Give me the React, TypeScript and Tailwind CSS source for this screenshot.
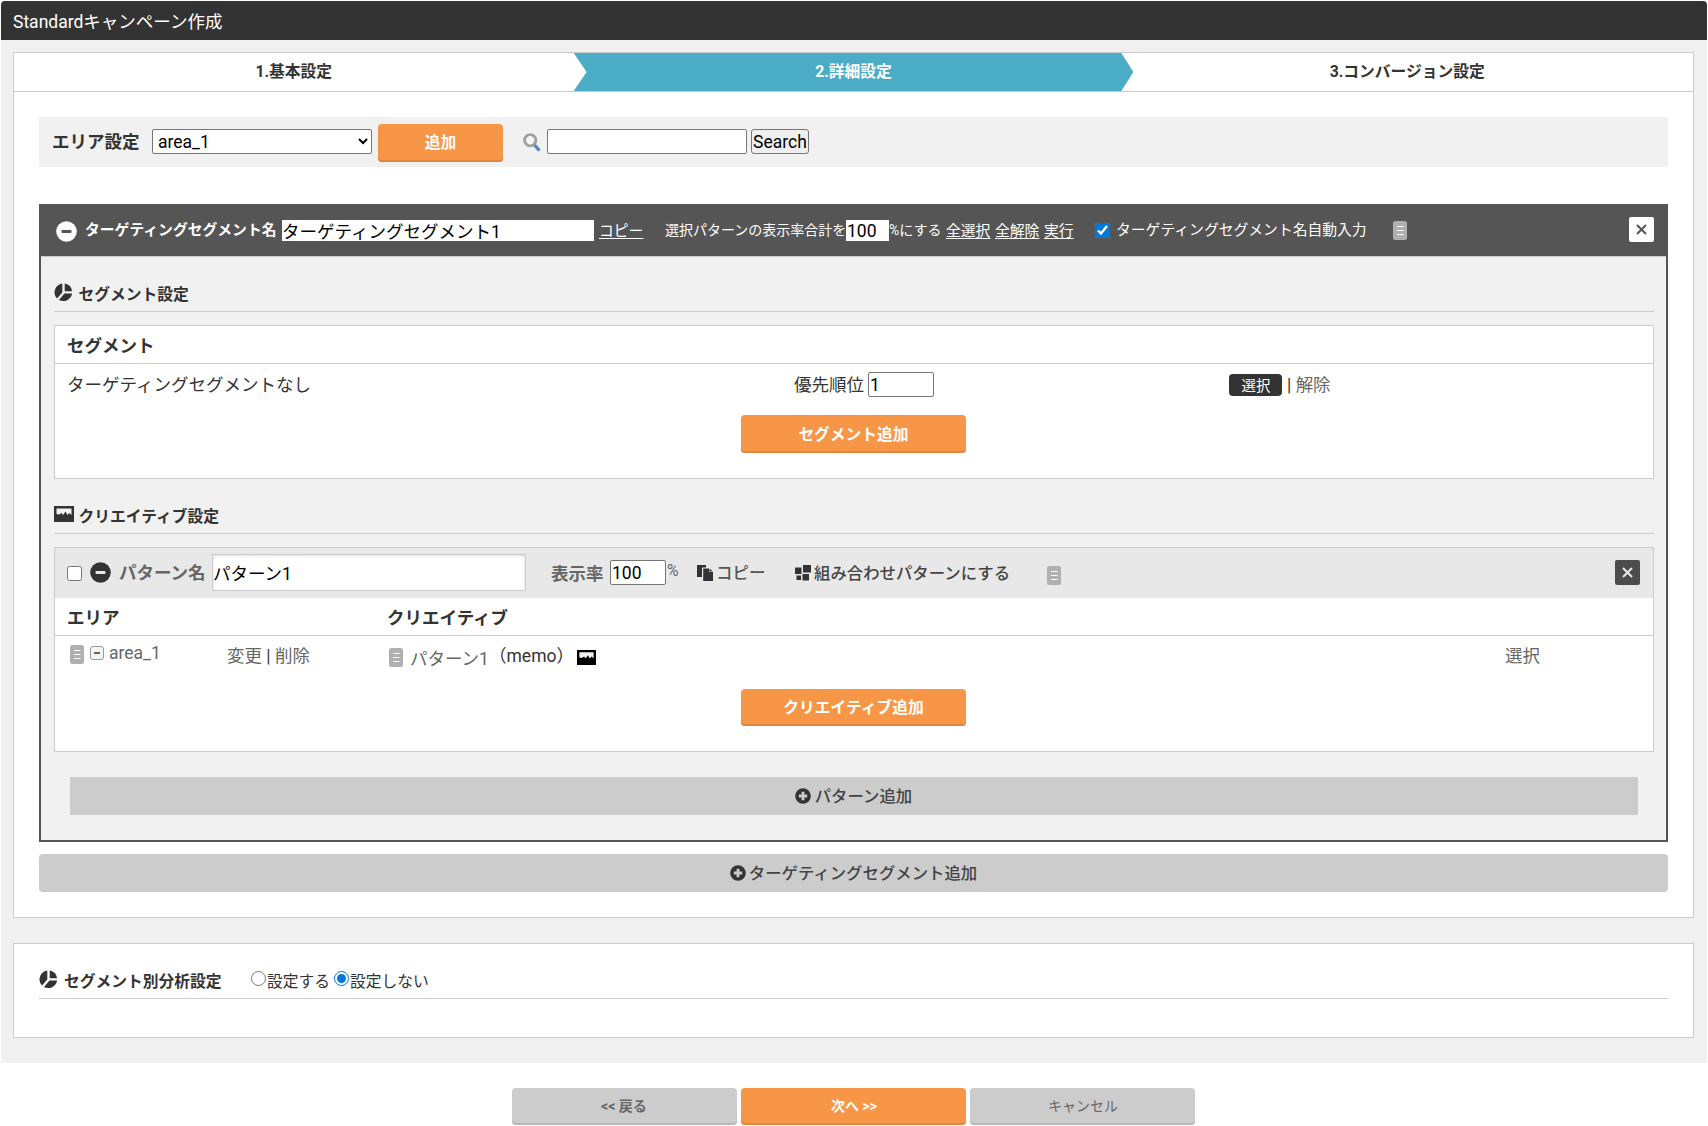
import { useState } from 'react'
import type { ReactNode } from 'react'

const STEPS = ['1.基本設定', '2.詳細設定', '3.コンバージョン設定']

function PieIcon() {
  return (
    <svg width="19" height="19" viewBox="0 0 18 19" className="shrink-0 fill-[#333]">
      <path d="M10.2 0.4A9 9 0 0 1 17.6 8.2H10.2Z" />
      <path d="M7.8 0.4V9.6L2.6 15.6A9 9 0 0 1 7.8 0.4Z" />
      <path d="M17.6 10.4A9 9 0 0 1 4.4 17L10 10.4Z" />
    </svg>
  )
}

function ImageIcon({ color, size = 'h-4 w-5' }: { color: string; size?: string }) {
  return (
    <svg viewBox="0 0 20 16" preserveAspectRatio="none" className={`${size} shrink-0`}>
      <rect width="20" height="16" fill={color} />
      <path d="M2.5 2.5H17.5V9L15.5 7L13.5 9L11.5 5.5L9 9L7.5 7L5 8.5L2.5 8Z" fill="#f1f1f1" />
    </svg>
  )
}

function MinusCircle({ bg, fg }: { bg: string; fg: string }) {
  return (
    <svg width="21" height="21" viewBox="0 0 21 21" className="shrink-0">
      <circle cx="10.5" cy="10.5" r="10.3" fill={bg} />
      <rect x="5.5" y="9" width="10" height="3" rx="1" fill={fg} />
    </svg>
  )
}

function PlusCircle() {
  return (
    <svg width="16" height="16" viewBox="0 0 16 16" className="shrink-0">
      <circle cx="8" cy="8" r="7.8" fill="#333" />
      <path d="M6.6 3.8h2.8v2.8h2.8v2.8H9.4v2.8H6.6V9.4H3.8V6.6h2.8z" fill="#ccc" />
    </svg>
  )
}

function MemoIcon() {
  return (
    <svg width="14" height="19" viewBox="0 0 14 19" className="shrink-0">
      <rect width="14" height="19" rx="2.5" fill="#b0b0b0" />
      <path d="M4 5.5h6.5M4 9.5h6.5M4 13.5h6.5" stroke="#fff" strokeWidth="1.1" />
    </svg>
  )
}

function CloseIcon({ bg, fg }: { bg: string; fg: string }) {
  return (
    <svg width="25" height="25" viewBox="0 0 25 25" className="shrink-0">
      <rect width="25" height="25" rx="2" fill={bg} />
      <path d="M8 8L17 17M17 8L8 17" stroke={fg} strokeWidth="2" />
    </svg>
  )
}

function CopyIcon() {
  return (
    <svg width="16" height="16" viewBox="0 0 16 16" className="shrink-0 fill-[#333]">
      <path d="M0 0H9V2.5H5V12H0Z" />
      <path d="M6.2 3.5H12V7H16V16H6.2Z" />
      <path d="M12.5 3.5L15.8 6.5H12.5Z" />
    </svg>
  )
}

function CombineIcon() {
  return (
    <svg width="16" height="16" viewBox="0 0 16 16" className="shrink-0 fill-[#333]">
      <rect x="0" y="2.5" width="6.5" height="6.5" />
      <rect x="8" y="0" width="8" height="7.5" />
      <rect x="1.5" y="10.5" width="4.5" height="4.5" />
      <path d="M7.5 9H14V15.5H7.5Z" />
    </svg>
  )
}

function SearchIcon() {
  return (
    <svg width="18" height="19" viewBox="0 0 18 19" className="shrink-0">
      <path d="M12 12.5L15.5 16.5" stroke="#4a86c8" strokeWidth="3.4" strokeLinecap="round" />
      <circle cx="7.2" cy="7.2" r="5.6" fill="#f4f4f4" stroke="#a0a0a0" strokeWidth="2.8" />
    </svg>
  )
}

function OrangeButton({ children, size }: { children: ReactNode; size: string }) {
  return (
    <button className={`${size} shrink-0 rounded bg-[#f79646] text-[15.75px] font-bold leading-5 text-white shadow-[inset_0_-2px_0_#e0873f]`}>
      {children}
    </button>
  )
}

function SectionTitle({ icon, children }: { icon: ReactNode; children: ReactNode }) {
  return (
    <div className="flex h-[43px] items-start border-b border-[#ccc]">
      <div className="mt-[14px] w-[24.5px] shrink-0">{icon}</div>
      <h2 className="mt-[16px] text-[15.75px] font-bold leading-5">{children}</h2>
    </div>
  )
}

export default function App() {
  const [segmentName, setSegmentName] = useState('ターゲティングセグメント1')
  const [patternName, setPatternName] = useState('パターン1')
  const [total, setTotal] = useState('100')
  const [rate, setRate] = useState('100')
  const [priority, setPriority] = useState('1')
  const [autoName, setAutoName] = useState(true)
  const [checked, setChecked] = useState(false)
  const [analyze, setAnalyze] = useState(false)

  return (
    <div className="h-[1126px] w-[1708px] overflow-hidden whitespace-nowrap bg-white px-px pt-px font-[Roboto,'Noto_Sans_CJK_JP',sans-serif] text-[17.5px] leading-5 text-[#333]">
      <header className="flex h-[39px] items-center rounded-t bg-[#333] pl-3 pt-0.5 text-white">Standardキャンペーン作成</header>

      <main className="h-[1023px] bg-[#f0f0f0] px-3 pt-3">
        <div className="mr-px h-[866px] border border-[#ccc] bg-white">
          <ol className="grid h-[39px] grid-cols-3 border-b border-[#ccc] text-center text-[15.75px] font-bold leading-[38px]">
            {STEPS.map((step, i) => (
              <li
                key={step}
                className={
                  i === 1
                    ? 'bg-[#4bacc6] text-white [clip-path:polygon(0_0,calc(100%-12px)_0,100%_50%,calc(100%-12px)_100%,0_100%,13px_50%)]'
                    : i === 2 ? 'pr-3' : ''
                }
              >
                {step}
              </li>
            ))}
          </ol>

          <div className="px-[25px] pt-[25px]">
            {/* area */}
            <div className="flex h-[50px] items-start bg-[#f1f1f1]">
              <span className="ml-[13px] mt-[15px] w-[100px] font-bold">エリア設定</span>
              <select className="mt-3 h-[25px] w-[220px] rounded-[2px] border border-[#767676] bg-white pl-px text-black">
                <option>area_1</option>
              </select>
              <div className="ml-[6px] mt-[7px]">
                <OrangeButton size="h-[38px] w-[125px]">追加</OrangeButton>
              </div>
              <div className="ml-5 mt-4 w-6"><SearchIcon /></div>
              <input className="mt-3 h-[25px] w-[200px] rounded-[2px] border border-[#767676] bg-white" />
              <button className="ml-1 mt-3 h-[25px] w-[58px] rounded-[3px] border border-[#767676] bg-[#efefef] text-black">Search</button>
            </div>

            {/* targeting segment */}
            <section className="mt-[37px] h-[638px] border-2 border-[#555] bg-[#f1f1f1]">
              <div className="flex h-[51px] items-start border-b border-[#ccc] bg-[#555] text-[14.8px] text-white">
                <div className="ml-[15px] mt-[15px] w-[29px]"><MinusCircle bg="#fff" fg="#555" /></div>
                <b className="mt-[14px] w-[197px]">ターゲティングセグメント名</b>
                <input
                  value={segmentName}
                  onChange={e => setSegmentName(e.target.value)}
                  className="mt-[14px] h-[21px] w-[312px] bg-white text-[17.5px] text-black"
                />
                <a className="ml-[5px] mt-[15px] w-[66px] underline underline-offset-2">コピー</a>
                <span className="mt-[14px] w-[181px] text-[14px]">選択パターンの表示率合計を</span>
                <input
                  value={total}
                  onChange={e => setTotal(e.target.value)}
                  className="mt-[14px] h-[21px] w-[43px] bg-white pl-px text-[17.5px] text-black"
                />
                <span className="mt-[14px] w-[57px] text-[14px]">%にする</span>
                <a className="mt-[15px] w-[49px] underline underline-offset-2">全選択</a>
                <a className="mt-[15px] w-[49px] underline underline-offset-2">全解除</a>
                <a className="mt-[15px] w-[51px] underline underline-offset-2">実行</a>
                <input
                  type="checkbox"
                  checked={autoName}
                  onChange={e => setAutoName(e.target.checked)}
                  className="mt-[17px] h-[15px] w-[15px] accent-[#0078d7]"
                />
                <span className="ml-[6px] mt-[14px] w-[277px]">ターゲティングセグメント名自動入力</span>
                <div className="mt-[15px]"><MemoIcon /></div>
                <div className="ml-auto mr-3 mt-[11px]"><CloseIcon bg="#fff" fg="#555" /></div>
              </div>

              <div className="pl-[13px] pr-3 pt-3">
                <SectionTitle icon={<PieIcon />}>セグメント設定</SectionTitle>

                <div className="mt-[13px] h-[154px] border border-[#ccc] bg-white">
                  <div className="h-[38px] border-b border-[#ccc] pl-3 pt-[10px] font-bold">セグメント</div>
                  <div className="flex h-[51px] items-start">
                    <span className="ml-3 mt-[11px] w-[727px]">ターゲティングセグメントなし</span>
                    <span className="mt-[11px] w-[74px]">優先順位</span>
                    <input
                      value={priority}
                      onChange={e => setPriority(e.target.value)}
                      className="mt-2 h-[25px] w-[66px] rounded-[2px] border border-[#767676] bg-white pl-px text-black"
                    />
                    <a className="ml-[295px] mt-[10px] h-[22px] w-[53px] rounded bg-[#333] pl-px text-center text-[14.4px] leading-[25px] text-white">選択</a>
                    <span className="ml-[5px] mt-[11px]">| <a className="text-[#666]">解除</a></span>
                  </div>
                  <div className="flex justify-center pr-px">
                    <OrangeButton size="h-[38px] w-[225px] pt-0.5">セグメント追加</OrangeButton>
                  </div>
                </div>

                <div className="mt-3">
                  <SectionTitle icon={<div className="pt-px"><ImageIcon color="#333" /></div>}>クリエイティブ設定</SectionTitle>
                </div>

                <div className="mt-[13px] h-[205px] border border-[#ccc] bg-white">
                  <div className="flex h-[50px] items-start bg-[#e8e8e8] text-[#666]">
                    <input
                      type="checkbox"
                      checked={checked}
                      onChange={e => setChecked(e.target.checked)}
                      className="ml-3 mt-[18px] h-[15px] w-[15px]"
                    />
                    <div className="ml-2 mt-[14px] w-[29px]"><MinusCircle bg="#333" fg="#e8e8e8" /></div>
                    <b className="mt-[15px] w-[93px]">パターン名</b>
                    <input
                      value={patternName}
                      onChange={e => setPatternName(e.target.value)}
                      className="mt-[6px] h-[37px] w-[314px] border border-[#ccc] bg-white text-black shadow-[inset_0_1px_3px_#ddd]"
                    />
                    <b className="ml-[25px] mt-4 w-[59px]">表示率</b>
                    <input
                      value={rate}
                      onChange={e => setRate(e.target.value)}
                      className="mt-3 h-[25px] w-[56px] rounded-[2px] border border-[#767676] bg-white pl-px text-black"
                    />
                    <span className="ml-px mt-[13px] w-[30px] text-[15.75px]">%</span>
                    <div className="mt-[17px] w-[19px]"><CopyIcon /></div>
                    <a className="mt-4 w-[79px] text-[16.5px] font-medium text-[#555]">コピー</a>
                    <div className="mt-[17px] w-[19px]"><CombineIcon /></div>
                    <a className="mt-4 w-[233px] text-[16.4px] font-medium text-[#444]">組み合わせパターンにする</a>
                    <div className="mt-[18px]"><MemoIcon /></div>
                    <div className="ml-auto mr-[13px] mt-3"><CloseIcon bg="#4d4d4d" fg="#e8e8e8" /></div>
                  </div>

                  <div className="flex h-[38px] border-b border-[#ccc] pl-3 pt-[10px] font-bold">
                    <span className="w-[320px]">エリア</span>
                    <span>クリエイティブ</span>
                  </div>

                  <div className="flex h-[53px] items-start text-[#666]">
                    <div className="ml-[14.5px] mt-[9px] w-[20.5px]"><MemoIcon /></div>
                    <div className="mt-[10px] flex h-[14px] w-[14px] items-center justify-center rounded-[3px] border border-[#999] bg-[#f4f4f4]">
                      <div className="h-[1.5px] w-[6px] bg-[#666]" />
                    </div>
                    <span className="ml-[5px] mt-[7px] w-[118px]">area_1</span>
                    <span className="mt-[10px] w-[162px]">変更 <span className="text-[#333]">|</span> 削除</span>
                    <div className="mt-3 w-[21px]"><MemoIcon /></div>
                    <span className="mt-[13px] w-[79px]">パターン1</span>
                    <span className="mt-[10px] w-[88px] text-[#333]">（memo）</span>
                    <div className="mt-[14px]"><ImageIcon color="#000" size="h-[15px] w-[19px]" /></div>
                    <a className="ml-auto mr-[113px] mt-[10px]">選択</a>
                  </div>

                  <div className="flex justify-center pr-px">
                    <OrangeButton size="h-[37px] w-[225px]">クリエイティブ追加</OrangeButton>
                  </div>
                </div>

                <button className="ml-4 mt-[25px] flex h-[38px] w-[1568px] items-center justify-center gap-1 bg-[#ccc] pr-px text-[16.4px] font-medium text-[#444]">
                  <PlusCircle /><span className="pt-0.5">パターン追加</span>
                </button>
              </div>
            </section>

            <button className="mt-3 flex h-[38px] w-full items-center justify-center gap-[3px] rounded bg-[#ccc] text-[16.4px] font-medium text-[#444]">
              <PlusCircle /><span className="pt-0.5">ターゲティングセグメント追加</span>
            </button>
          </div>
        </div>

        <div className="mr-px mt-[25px] h-[95px] border border-[#ccc] bg-white px-[25px]">
          <div className="flex h-[55px] items-start border-b border-[#ccc] text-[15.75px]">
            <div className="mt-[26px] w-[25px]"><PieIcon /></div>
            <h2 className="mt-[28px] w-[187px] font-bold">セグメント別分析設定</h2>
            <label className="flex items-start">
              <input type="radio" checked={analyze} onChange={() => setAnalyze(true)} className="mt-[27px] h-[15px] w-[15px] accent-[#0078d7]" />
              <span className="mt-[28px] w-[68px] pl-px">設定する</span>
            </label>
            <label className="flex items-start">
              <input type="radio" checked={!analyze} onChange={() => setAnalyze(false)} className="mt-[27px] h-[15px] w-[15px] accent-[#0078d7]" />
              <span className="mt-[28px] pl-px">設定しない</span>
            </label>
          </div>
        </div>
      </main>

      <footer className="mt-[25px] flex justify-center gap-1 pr-0.5 text-[14px]">
        <button className="h-[37px] w-[225px] rounded bg-[#ccc] pb-0.5 font-bold text-[#666] shadow-[inset_0_-2px_0_#b8b8b8]">&lt;&lt; 戻る</button>
        <button className="h-[37px] w-[225px] rounded bg-[#f79646] pb-0.5 pl-0.5 font-bold text-white shadow-[inset_0_-2px_0_#e0873f]">次へ &gt;&gt;</button>
        <button className="h-[37px] w-[225px] rounded bg-[#ccc] pb-0.5 pl-0.5 text-[#666] shadow-[inset_0_-2px_0_#b8b8b8]">キャンセル</button>
      </footer>
    </div>
  )
}
